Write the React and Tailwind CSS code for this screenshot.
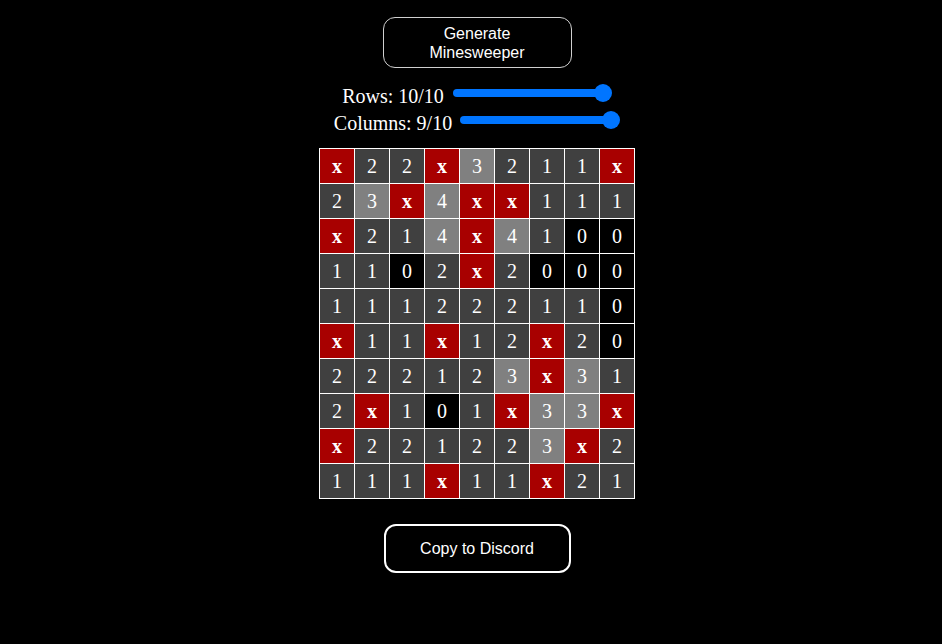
import React from 'react';

const board = [
  ['x', '2', '2', 'x', '3', '2', '1', '1', 'x'],
  ['2', '3', 'x', '4', 'x', 'x', '1', '1', '1'],
  ['x', '2', '1', '4', 'x', '4', '1', '0', '0'],
  ['1', '1', '0', '2', 'x', '2', '0', '0', '0'],
  ['1', '1', '1', '2', '2', '2', '1', '1', '0'],
  ['x', '1', '1', 'x', '1', '2', 'x', '2', '0'],
  ['2', '2', '2', '1', '2', '3', 'x', '3', '1'],
  ['2', 'x', '1', '0', '1', 'x', '3', '3', 'x'],
  ['x', '2', '2', '1', '2', '2', '3', 'x', '2'],
  ['1', '1', '1', 'x', '1', '1', 'x', '2', '1'],
];

const cellColor = (v) => {
  if (v === 'x') return 'bg-[#a80000] font-bold';
  if (v === '0') return 'bg-black';
  if (v === '3' || v === '4') return 'bg-[#808080]';
  return 'bg-[#404040]';
};

const Slider = ({ width }) => (
  <div className={`flex items-center h-[18px] mb-[8px] ${width}`}>
    <div className="flex-1 h-[8px] rounded-full bg-[#0075ff]" />
    <div className="w-[18px] h-[18px] rounded-full bg-[#0075ff] -ml-[9px] shrink-0" />
  </div>
);

export default function App() {
  return (
    <div className="min-h-screen w-full bg-black text-white">
      <div className="flex flex-col items-center pl-[12px]">
        <button className="mt-[17px] w-[189px] h-[51px] px-[20px] border-[1.5px] border-[#d0d0d0] rounded-[12px] bg-black text-white text-[16px] leading-[19px] font-['Liberation_Sans',Arial,sans-serif]">
          Generate Minesweeper
        </button>

        <div className="mt-[15px] flex flex-col items-center font-['Liberation_Serif','Times_New_Roman',serif] text-[20px]">
          <div className="flex items-center h-[27px] gap-[9px]">
            <span className="leading-[27px]">Rows: 10/10</span>
            <Slider width="w-[159px]" />
          </div>
          <div className="flex items-center h-[27px] gap-[8px]">
            <span className="leading-[27px]">Columns: 9/10</span>
            <Slider width="w-[160px]" />
          </div>
        </div>

        <div className="mt-[11px] grid grid-cols-[repeat(9,34px)] gap-px bg-white p-px font-['Liberation_Serif','Times_New_Roman',serif] text-[20px]">
          {board.flat().map((v, i) => (
            <div key={i} className={`h-[34px] flex items-center justify-center ${cellColor(v)}`}>
              {v}
            </div>
          ))}
        </div>

        <button className="mt-[25px] w-[187px] h-[49px] border-2 border-white rounded-[12px] bg-black text-white text-[16px] font-['Liberation_Sans',Arial,sans-serif]">
          Copy to Discord
        </button>
      </div>
    </div>
  );
}
